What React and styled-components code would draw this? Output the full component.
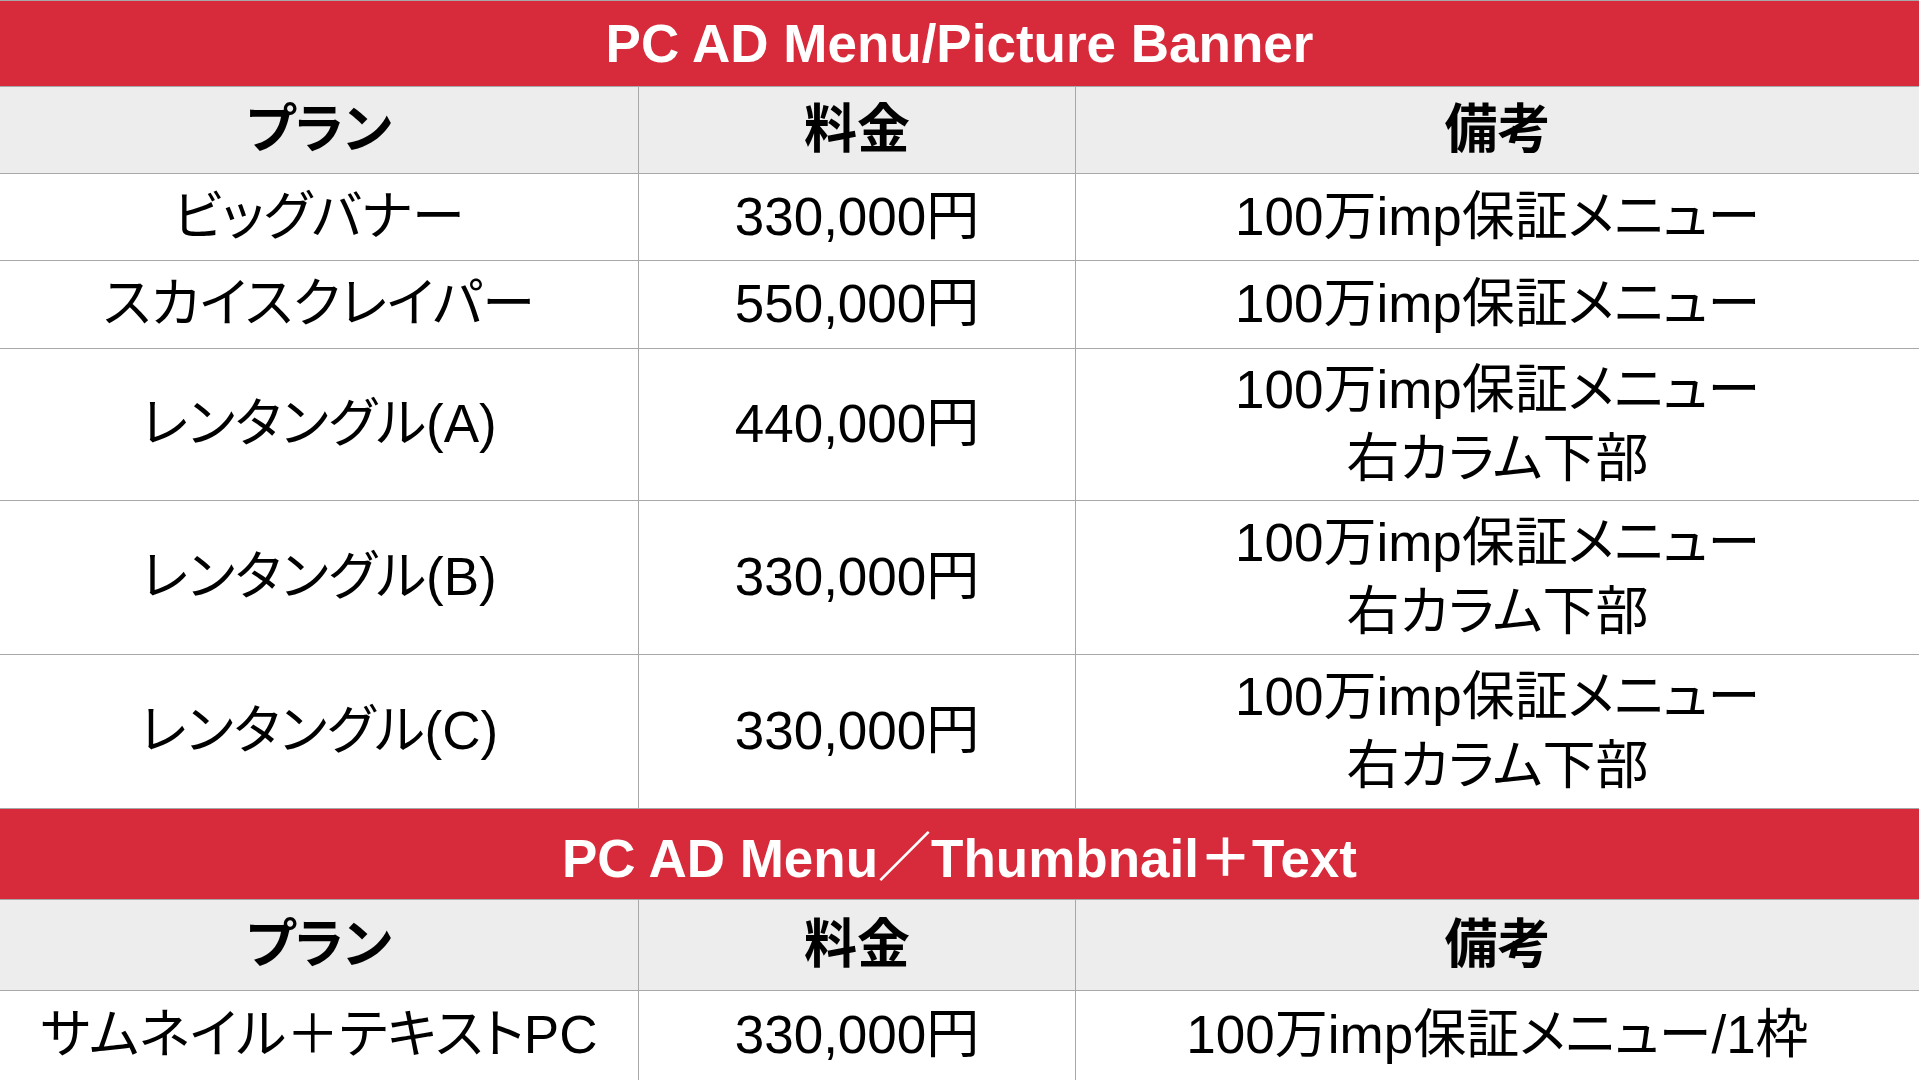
import React from "react";
import styled, { createGlobalStyle } from "styled-components";

const GlobalStyle = createGlobalStyle`
  html, body {
    margin: 0;
    padding: 0;
    background: #ffffff;
  }
  body {
    font-family: "Liberation Sans", Arial, "Noto Sans CJK JP", sans-serif;
    font-feature-settings: "palt";
    color: #000;
  }
`;

const sections = [
  {
    title: "PC AD Menu/Picture Banner",
    titleHeight: 86,
    headHeight: 87,
    rows: [
      { plan: "ビッグバナー", price: "330,000円", note: ["100万imp保証メニュー"], h: 87 },
      { plan: "スカイスクレイパー", price: "550,000円", note: ["100万imp保証メニュー"], h: 88 },
      { plan: "レンタングル(A)", price: "440,000円", note: ["100万imp保証メニュー", "右カラム下部"], h: 152 },
      { plan: "レンタングル(B)", price: "330,000円", note: ["100万imp保証メニュー", "右カラム下部"], h: 154 },
      { plan: "レンタングル(C)", price: "330,000円", note: ["100万imp保証メニュー", "右カラム下部"], h: 154 },
    ],
  },
  {
    title: "PC AD Menu／Thumbnail＋Text",
    titleHeight: 91,
    headHeight: 91,
    rows: [
      { plan: "サムネイル＋テキストPC", price: "330,000円", note: ["100万imp保証メニュー/1枠"], h: 90 },
    ],
  },
];

const App = () => {
  return (
    <>
      <GlobalStyle />
      <Sheet>
        {sections.map((section) => (
          <Section key={section.title}>
            <TitleBar h={section.titleHeight}>{section.title}</TitleBar>
            <Row h={section.headHeight} head>
              <Cell>プラン</Cell>
              <Cell>料金</Cell>
              <Cell>備考</Cell>
            </Row>
            {section.rows.map((row) => (
              <Row key={row.plan} h={row.h}>
                <Cell>{row.plan}</Cell>
                <Cell>{row.price}</Cell>
                <Cell>
                  {row.note.map((line) => (
                    <Line key={line}>{line}</Line>
                  ))}
                </Cell>
              </Row>
            ))}
          </Section>
        ))}
      </Sheet>
    </>
  );
};

const Sheet = styled.main`
  width: 1919px;
  height: 1080px;
  display: flex;
  flex-direction: column;
  overflow: hidden;
`;

const Section = styled.section`
  display: flex;
  flex-direction: column;
`;

const TitleBar = styled.h2`
  margin: 0;
  box-sizing: border-box;
  height: ${(props) => props.h}px;
  background: #d72a3b;
  border-top: 1px solid #a8a8a8;
  color: #fff;
  font-size: 53px;
  font-weight: 700;
  display: flex;
  align-items: center;
  justify-content: center;
  font-feature-settings: normal;
`;

const Row = styled.div`
  box-sizing: border-box;
  height: ${(props) => props.h}px;
  display: grid;
  grid-template-columns: 639px 437px 1fr;
  border-top: 1px solid #a8a8a8;
  background: ${(props) => (props.head ? "#ededed" : "#ffffff")};
  font-weight: ${(props) => (props.head ? 700 : 400)};
`;

const Cell = styled.div`
  box-sizing: border-box;
  display: flex;
  flex-direction: column;
  align-items: center;
  justify-content: center;
  border-right: 1px solid #a8a8a8;
  font-size: 53px;
  line-height: 1.3;
  white-space: nowrap;

  &:last-child {
    border-right: none;
  }
`;

const Line = styled.span`
  display: block;
`;

export default App;
